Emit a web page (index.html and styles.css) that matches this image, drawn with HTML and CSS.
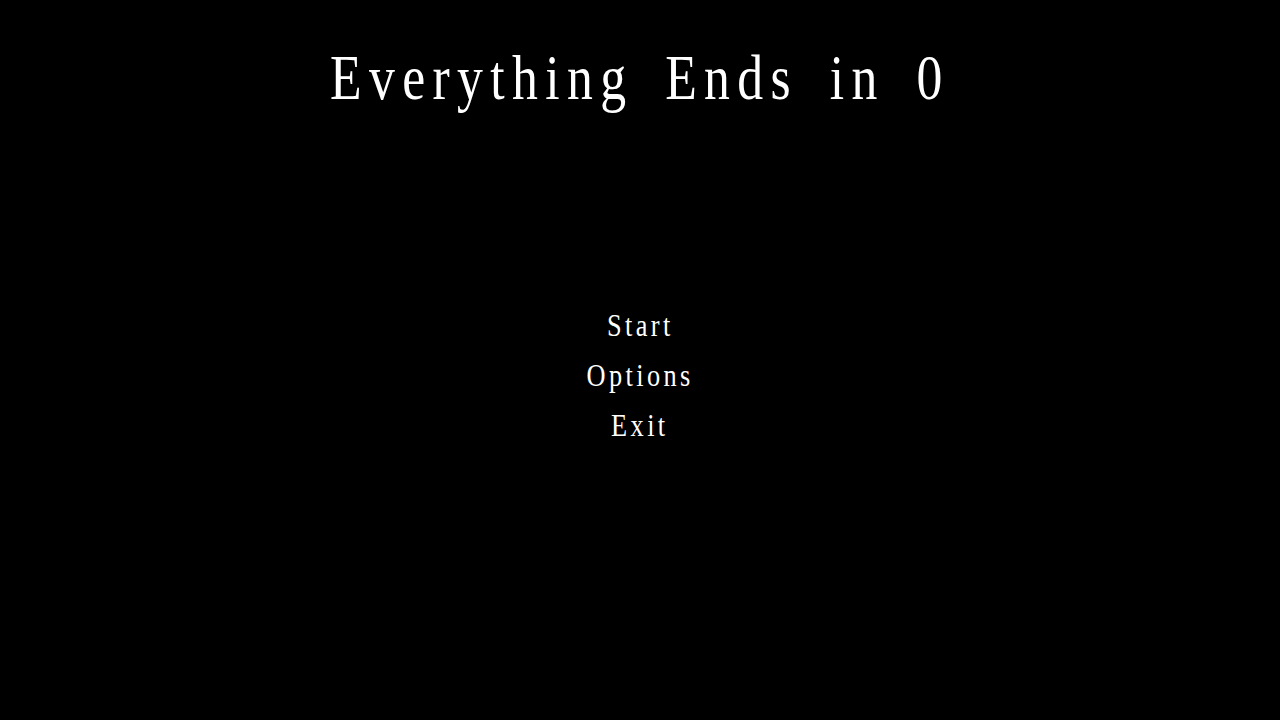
FILE: index.html
```html
<!DOCTYPE html>
<html lang="en">
<head>
    <meta charset="UTF-8">
    <meta name="viewport" content="width=device-width, initial-scale=1.0">
    <title>Everything Ends in 0</title>
    <link rel="stylesheet" href="styles.css">
</head>
<body>
    <header class="title-bar">
        <h1 class="title">Everything Ends in 0</h1>
    </header>
    <nav class="menu">
        <a class="menu-item" href="#">Start</a>
        <a class="menu-item" href="#">Options</a>
        <a class="menu-item" href="#">Exit</a>
    </nav>
</body>
</html>
```

FILE: styles.css
```css
body {
    margin: 0;
    height: 720px;
    background: #000;
    color: #fff;
    font-family: 'Liberation Serif', 'DejaVu Serif', serif;
    overflow: hidden;
}
.title-bar {
    padding-top: 42px;
    text-align: center;
}
.title {
    display: inline-block;
    margin: 0;
    font-size: 63px;
    font-weight: normal;
    line-height: 72px;
    letter-spacing: 9px;
    word-spacing: 14px;
    transform: scaleX(0.82); /* tall, narrow letters */
}
.menu {
    margin-top: 187px;
    display: flex;
    flex-direction: column;
    align-items: center;
}
.menu-item {
    color: #fff;
    text-decoration: none;
    font-size: 31px;
    line-height: 50px;
    letter-spacing: 4px;
    transform: scaleX(0.85);
}
```
